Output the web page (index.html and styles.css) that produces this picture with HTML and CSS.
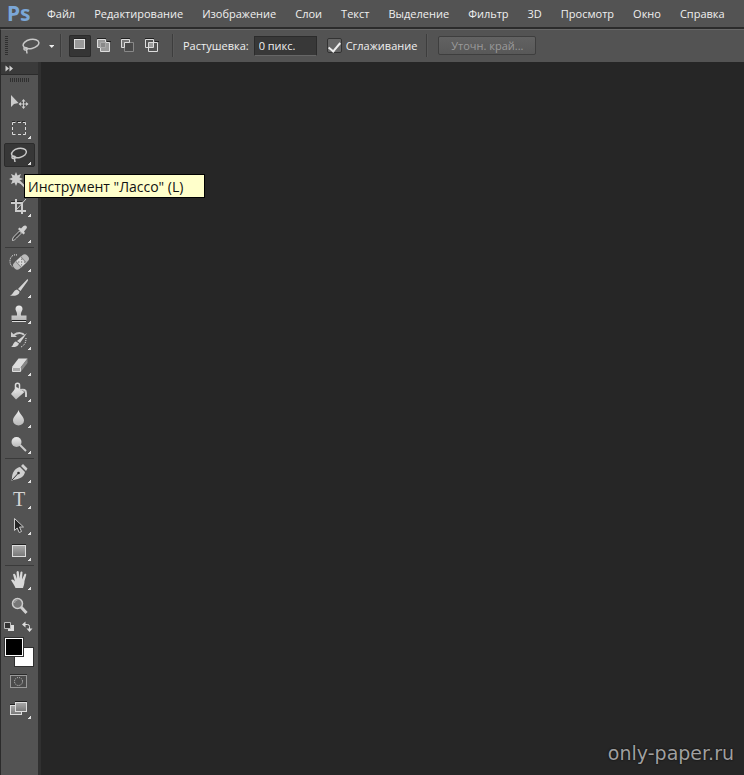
FILE: index.html
```html
<!DOCTYPE html>
<html lang="ru">
<head>
<meta charset="utf-8">
<title>Ps</title>
<meta name="viewport" content="width=device-width, initial-scale=1">
<link rel="stylesheet" href="styles.css">
</head>
<body>
<svg class="defs" aria-hidden="true">
  <defs>
    <linearGradient id="metal" x1="0" y1="0" x2="0" y2="1"><stop offset="0" stop-color="#ececec"/><stop offset="1" stop-color="#b8b8b8"/></linearGradient>
    <linearGradient id="steel" x1="0" y1="0" x2="0" y2="1"><stop offset="0" stop-color="#aaa"/><stop offset="1" stop-color="#777"/></linearGradient>
  </defs>
</svg>
<header class="menubar">
  <span class="logo">Ps</span>
  <nav class="menus">
    <button>Файл</button><button>Редактирование</button><button>Изображение</button><button>Слои</button><button>Текст</button><button>Выделение</button><button>Фильтр</button><button>3D</button><button>Просмотр</button><button>Окно</button><button>Справка</button>
  </nav>
</header>
<section class="options">
  <span class="grip"></span>
  <button class="preset" aria-label="Лассо">
    <svg width="32" height="22" viewBox="0 0 32 22" fill="none"><g stroke="#c8c8c8" stroke-width="1.5"><ellipse cx="9" cy="9" rx="8" ry="4.5" transform="rotate(-12 9 9)"/><path d="M3 12.500c-2 1-1 3 1 2.500s2-2.500-1-2.500M4.500 15l.5 3.500"/></g><path d="M27 10h5.500l-2.750 3z" fill="#eee"/></svg>
  </button>
  <span class="divider"></span>
  <div class="modes">
    <button class="mode active" aria-label="Новая"><svg width="22" height="22" viewBox="0 0 22 22"><path d="M5 3.500h12" stroke="#222"/><rect x="5.500" y="4.500" width="10" height="9" fill="#999" stroke="#ddd"/></svg></button>
    <button class="mode" aria-label="Добавить"><svg width="22" height="22" viewBox="0 0 22 22"><path d="M4 3.500h9M14 6.500h4" stroke="#222"/><path d="M4.500 4.500h8v3h4v9h-9v-4h-3z" fill="#999" stroke="#ddd"/><path d="M7.500 12.500v-5h5v5z" fill="#888" stroke="#aaa"/></svg></button>
    <button class="mode" aria-label="Вычесть"><svg width="22" height="22" viewBox="0 0 22 22"><path d="M4 3.500h9" stroke="#222"/><path d="M7.500 7.500h9v9h-9z" fill="#4a4a4a" stroke="#888"/><path d="M4.500 4.500h8v3h-5v5h-3z" fill="#777" stroke="#ddd"/></svg></button>
    <button class="mode" aria-label="Пересечь"><svg width="22" height="22" viewBox="0 0 22 22"><path d="M4 3.500h9M14 6.500h4" stroke="#222"/><path d="M4.500 4.500h8v8h-8zM7.500 7.500h9v9h-9z" fill="none" stroke="#ddd"/><path d="M8 8h4v4h-4z" fill="#999"/></svg></button>
  </div>
  <span class="divider"></span>
  <label class="feather">Растушевка:<input type="text" value="0 пикс."></label>
  <label class="smooth"><input type="checkbox" checked>Сглаживание</label>
  <span class="divider"></span>
  <button class="refine" disabled>Уточн. край...</button>
</section>
<main class="workspace">
  <aside class="toolbar">
    <button class="collapse" aria-label="Развернуть"><svg width="9" height="7" viewBox="0 0 9 7"><path d="M.5 .5L4 3.500.5 6.500zM4.500.5L8 3.500 4.500 6.500z" fill="#d0d0d0"/></svg></button>
    <span class="grip across"></span>
    <div class="tools">
      <button class="tool" aria-label="Перемещение"><svg viewBox="0 0 31 26"><path d="M7 5v12l3-3 4.500-1z" fill="#ccc"/><path d="M19.500 10v8M15.500 14h8" stroke="#ccc"/><path d="M19.500 9l2 2.500h-4zM19.500 19l2-2.500h-4zM14.500 14l2.500-2v4zM24.500 14l-2.500-2v4z" fill="#ccc"/></svg></button>
      <button class="tool more" aria-label="Прямоугольная область"><svg viewBox="0 0 31 26"><path d="M8 5.500h14" stroke="#2b2b2b" stroke-dasharray="3 2"/><path d="M8.500 9V6.500h3M14 6.500h3M19 6.500h2.500V9M21.500 11v3M21.500 16v2.500H19M17 18.500h-3M11.500 18.500h-3V16M8.500 14v-3" stroke="#ddd" fill="none"/></svg></button>
      <div class="tool-wrap">
        <button class="tool more active" aria-label="Лассо" aria-describedby="tip"><svg viewBox="0 0 31 26" fill="none" stroke="#c8c8c8" stroke-width="1.500"><ellipse cx="15" cy="11" rx="7.500" ry="4.500" transform="rotate(-12 15 11)"/><path d="M9 14c-2 1-1 3 1 2.500s2-2.500-1-2.500M10.500 17l.5 3"/></svg></button>
        <div class="tooltip" id="tip" role="tooltip">Инструмент "Лассо" (L)</div>
      </div>
      <button class="tool more" aria-label="Волшебная палочка"><svg viewBox="0 0 31 26"><path d="M12 4l1.500 3.500L17 6l-1.500 3.500L19 11l-3.500 1.500L17 16l-3.500-1.500L12 18l-1.500-3.500L7 16l1.500-3.500L5 11l3.500-1.500L7 6l3.500 1.500z" fill="#ccc"/><path d="M15 13l7 7" stroke="#ccc" stroke-width="2"/></svg></button>
      <button class="tool more" aria-label="Рамка"><svg viewBox="0 0 31 26" fill="none"><path d="M7 7.500h11" stroke="#2b2b2b"/><path d="M12 5v12h10M7 9h11v11" stroke="#ccc" stroke-width="2"/><path d="M13 15l9-10" stroke="#ccc"/></svg></button>
      <button class="tool more" aria-label="Пипетка"><svg viewBox="0 0 31 26"><path d="M8.500 20.500c0-2 .5-3 2-4.500l5-5 2 2-5 5c-1.500 1.500-2.500 2.500-4 2.500z" fill="#444" stroke="#ccc"/><path d="M14 9l1.500-1.500 1.500 1L19.500 6c2-1.500 4.500.5 3 2.500L20 11.500l1 1.500-1.500 1.500z" fill="#d0d0d0"/></svg></button>
      <hr>
      <button class="tool more" aria-label="Восстанавливающая кисть"><svg viewBox="0 0 31 26"><path d="M13 6c-4-1-7 2-7 6 0 3 1 5 3 6" fill="none" stroke="#eee" stroke-dasharray="1 1"/><g transform="rotate(-43 17 13)"><rect x="8" y="9" width="18" height="8" rx="3.500" fill="#bbb"/><rect x="13" y="9" width="8" height="8" fill="#d8d8d8"/><path d="M13.500 9v8M20.500 9v8" stroke="#888"/><path d="M15 11.500h1M17 13.500h1M19 11.500h1M15 15.500h1M19 15.500h1" stroke="#555"/></g></svg></button>
      <button class="tool more" aria-label="Кисть"><svg viewBox="0 0 31 26"><path d="M23.500 4c.8.8.5 1.500 0 2.200L16.500 16l-2.500-2z" fill="#d5d5d5"/><path d="M13 14.500l2.500 2c0 3-3 5-9.500 4 3-.5 3.500-5.500 7-6z" fill="#d5d5d5"/></svg></button>
      <button class="tool more" aria-label="Штамп"><svg viewBox="0 0 31 26"><path d="M11.500 8a3.500 3.500 0 0 1 7 0c0 2-2 3-1.500 6.500h5.500V19h-15v-4.500H13c.5-3.500-1.500-4.500-1.500-6.500z" fill="url(#metal)"/><path d="M8 20.500h14" stroke="#ddd"/><path d="M8 19.500h14" stroke="#222"/></svg></button>
      <button class="tool more" aria-label="Архивная кисть"><svg viewBox="0 0 31 26"><path d="M10 8c4-3 9-2 10 0" fill="none" stroke="#ccc" stroke-width="2"/><path d="M7 10V5l6 5z" fill="#ccc"/><path d="M23 6L16 16l-3-2zM12 14.500l3 2c-1 3-4 4-8 3.500 2.500-1 2-5 5-5.500z" fill="#d5d5d5"/><path d="M22 11c0 4-1 7-5 9" fill="none" stroke="#eee" stroke-dasharray="1 1"/></svg></button>
      <button class="tool more" aria-label="Ластик"><svg viewBox="0 0 31 26"><path d="M8 14l6.500-8.500h9L17 14z" fill="#ddd"/><path d="M8.500 14.500h8v4h-8z" fill="#aaa" stroke="#ddd"/><path d="M17 14l6.500-8.500V10L17 18.500z" fill="#888"/></svg></button>
      <button class="tool more" aria-label="Заливка"><svg viewBox="0 0 31 26"><path d="M12.500 8l8 5-8.500 7.500L7 15z" fill="url(#metal)"/><path d="M11.500 14V6c0-2.500 4-2.500 4 0v6" fill="none" stroke="#ddd" stroke-width="1.500"/><path d="M16 11c4-1 6 0 6 3v4" fill="none" stroke="#ccc" stroke-width="2"/></svg></button>
      <button class="tool more" aria-label="Размытие"><svg viewBox="0 0 31 26"><path d="M14.500 5c1 4 5.500 6.500 5.500 10.500a5.500 5 0 0 1-11 0C9 11.500 13.500 9 14.500 5z" fill="url(#metal)"/></svg></button>
      <button class="tool more" aria-label="Осветлитель"><svg viewBox="0 0 31 26"><circle cx="12.500" cy="11" r="5" fill="url(#metal)"/><path d="M16 14l6 6" stroke="#ccc" stroke-width="2"/></svg></button>
      <hr>
      <button class="tool more" aria-label="Перо"><svg viewBox="0 0 31 26"><path d="M17 6L19 4l4.500 4.500L22 11zM16 7l5 5c-1 5-5 7-12 8l-1.500 1 .5-3c0-5 3-10 8-11z" fill="#d0d0d0"/><path d="M8 20l6-6.500" stroke="#333"/><circle cx="14.500" cy="13" r="1.300" fill="#333"/></svg></button>
      <button class="tool more" aria-label="Текст"><svg viewBox="0 0 31 26"><text class="type-glyph" x="15" y="20">T</text></svg></button>
      <button class="tool more" aria-label="Выделение контура"><svg viewBox="0 0 31 26"><path d="M10.500 6.500v12l2.700-2.500 2 4.500 2.300-1-2-4.500h4z" fill="#252525" stroke="#ccc"/></svg></button>
      <button class="tool more" aria-label="Прямоугольник"><svg viewBox="0 0 31 26"><path d="M8 6.500h14" stroke="#222"/><rect x="8.500" y="7.500" width="13" height="11" fill="url(#steel)" stroke="#ddd"/></svg></button>
      <hr>
      <button class="tool more" aria-label="Рука"><svg viewBox="0 0 31 26"><path d="M11.500 21c-1-3-3-5-4.500-8 1.500-1.500 3 0 4 1.500L9 7.500c1-1.500 2-.5 2.500.5l1.500 4-.5-7c1-1.500 2-1 2.300 0l.7 6.500 1-6.500c.8-1 2-.5 2 .5L18 12.500 20.500 7c1-.8 2-.2 1.700 1L20.500 14c0 3-1 5-1.500 7z" fill="#d8d8d8"/></svg></button>
      <button class="tool" aria-label="Масштаб"><svg viewBox="0 0 31 26"><path d="M17 14l5.500 6" stroke="#d0d0d0" stroke-width="3"/><circle cx="13.500" cy="10.500" r="5" fill="#777" stroke="#ccc" stroke-width="1.500"/><path d="M10.500 10a3 3 0 0 1 3-3" stroke="#aaa" fill="none"/></svg></button>
    </div>
    <div class="swatch-actions">
      <button aria-label="Цвета по умолчанию"><svg width="11" height="11" viewBox="0 0 11 11"><path d="M4 4h6v6H4z" fill="#ddd"/><path d="M.5 1.500h6v6h-6z" fill="#333" stroke="#bbb"/></svg></button>
      <button aria-label="Поменять цвета"><svg width="11" height="11" viewBox="0 0 11 11"><path d="M2 3.500h3.500q2 0 2 2V8" fill="none" stroke="#ddd"/><path d="M0 3.500L3.500.5v6zM7.500 11L4.500 7.500h6z" fill="#ddd"/></svg></button>
    </div>
    <div class="swatches"><button class="swatch back" aria-label="Фон"></button><button class="swatch front" aria-label="Основной цвет"></button></div>
    <div class="view-tools">
      <button class="tool" aria-label="Быстрая маска"><svg viewBox="0 0 31 26"><path d="M6 6.500h17" stroke="#2b2b2b"/><rect x="6.500" y="7.500" width="16" height="12" fill="#4b4b4b" stroke="#999"/><circle cx="14.500" cy="13.500" r="4" fill="none" stroke="#ccc" stroke-dasharray="1 1.100"/></svg></button>
      <button class="tool more" aria-label="Режим экрана"><svg viewBox="0 0 31 26"><path d="M6 8.500h6M11 5.500h12" stroke="#222"/><rect x="6.500" y="9.500" width="11" height="9" fill="url(#steel)" stroke="#ddd"/><rect x="11.500" y="6.500" width="11" height="9" fill="url(#steel)" stroke="#ddd"/></svg></button>
    </div>
  </aside>
  <div class="canvas"><span class="watermark">only-paper.ru</span></div>
</main>
</body>
</html>
```
FILE: styles.css
```css
* { box-sizing: border-box; }
body {
  margin: 0;
  min-height: 100vh;
  display: flex;
  flex-direction: column;
  background: #262626;
  color: #f0f0f0;
  font: 11px/16px "Open Sans", "Noto Sans", sans-serif;
  overflow-x: hidden;
}
button, input { font: inherit; color: inherit; margin: 0; }
button { padding: 0; border: 0; background: none; }
svg { display: block; }
.defs { position: absolute; width: 0; height: 0; }

.menubar {
  display: flex;
  align-items: center;
  height: 29px;
  background: #535353;
  border-bottom: 2px solid #2b2b2b;
}
.logo {
  width: 47px;
  padding-left: 7px;
  color: #7ba7d7;
  font: bold 21px/24px "Noto Sans", sans-serif;
  padding-bottom: 2px;
}
.menus { display: flex; gap: 19px; white-space: nowrap; }

.options {
  display: flex;
  align-items: center;
  height: 33px;
  padding: 0 0 1px 4px;
  background: #535353;
  border-top: 1px solid #686868;
  border-left: 1px solid #2b2b2b;
  white-space: nowrap;
}
.grip {
  width: 3px;
  height: 20px;
  background: repeating-linear-gradient(#2f2f2f 0 1px, #535353 1px 2px);
}
.preset { margin: 0 6px 0 14px; }
.divider {
  width: 2px;
  height: 23px;
  background: #3d3d3d;
  border-right: 1px solid #595959;
}
.modes { display: flex; gap: 2px; margin: 0 9px 0 7px; }
.mode { width: 22px; height: 22px; border-radius: 2px; }
.mode.active { background: #353535; box-shadow: 0 0 0 1px #2b2b2b inset; }
.feather { display: flex; align-items: center; gap: 5px; margin-left: 9px; }
.feather input {
  width: 63px;
  height: 20px;
  padding: 0 4px;
  background: #383838;
  border: 1px solid #2b2b2b;
  border-bottom-color: #666;
}
.smooth { display: flex; align-items: center; gap: 4px; margin: 0 9px 0 10px; }
.smooth input {
  appearance: none;
  width: 15px;
  height: 15px;
  display: grid;
  place-items: center;
  background: #666;
  border: 1px solid #333;
  border-radius: 2px;
}
.smooth input::after {
  content: "";
  width: 5px;
  height: 10px;
  border: solid #eee;
  border-width: 0 2px 2px 0;
  transform: rotate(40deg);
}
.refine {
  width: 98px;
  height: 19px;
  margin-left: 10px;
  border: 1px solid #3e3e3e;
  border-radius: 2px;
  background: linear-gradient(#626262, #585858);
  color: #9a9a9a;
  line-height: 14px;
}

.workspace { flex: 1; display: flex; }
.toolbar {
  width: 41px;
  padding-bottom: 16px;
  background: #535353;
  border-left: 1px solid #2b2b2b;
  border-right: 3px solid #303030;
}
.collapse {
  display: flex;
  align-items: center;
  width: 100%;
  height: 13px;
  padding-left: 4px;
  background: #3a3a3a;
  border-bottom: 1px solid #2b2b2b;
}
.grip.across {
  display: block;
  width: 20px;
  height: 4px;
  margin: 3px 0 8px 9px;
  background: repeating-linear-gradient(90deg, #2f2f2f 0 1px, #535353 1px 2px);
}
.tool { position: relative; display: block; width: 31px; height: 26px; margin-left: 3px; }
.tool svg { width: 31px; height: 26px; }
.tool.active::before {
  content: "";
  position: absolute;
  inset: 1px 0;
  background: #373737;
  border: 1px solid #2b2b2b;
  border-radius: 2px;
}
.tool.active svg { position: relative; }
.tool.more::after {
  content: "";
  position: absolute;
  left: 24px;
  top: 20px;
  width: 3px;
  height: 3px;
  background: linear-gradient(135deg, transparent 45%, #e0e0e0 45%);
}
.type-glyph { fill: #d5d5d5; font: 20px "Liberation Serif", serif; text-anchor: middle; }
hr { height: 1px; margin: 1px 4px; border: 0; background: #3a3a3a; }
.tool-wrap { position: relative; }
.tooltip {
  position: absolute;
  z-index: 2;
  left: 23px;
  top: 32px;
  width: 181px;
  height: 24px;
  padding-left: 3px;
  background: #ffffcb;
  border: 1px solid #000;
  color: #111;
  font-size: 14px;
  line-height: 23px;
  white-space: nowrap;
}
.swatch-actions { display: flex; gap: 7px; padding: 2px 0 5px 3px; }
.swatches { display: grid; width: 30px; height: 30px; margin-left: 3px; }
.swatch { grid-area: 1 / 1; width: 20px; height: 20px; border: 1px solid #303030; }
.back { place-self: end; background: #fff; }
.front { place-self: start; background: #000; box-shadow: inset 0 0 0 1px #fff; }
.view-tools { display: grid; gap: 2px; padding-top: 1px; }

.canvas { flex: 1; display: flex; align-items: flex-end; justify-content: flex-end; padding: 0 10px 10px; }
.watermark { color: #a0a0a0; font: 19px/24px "DejaVu Sans", sans-serif; text-shadow: 0 0 2px #000; }
```
